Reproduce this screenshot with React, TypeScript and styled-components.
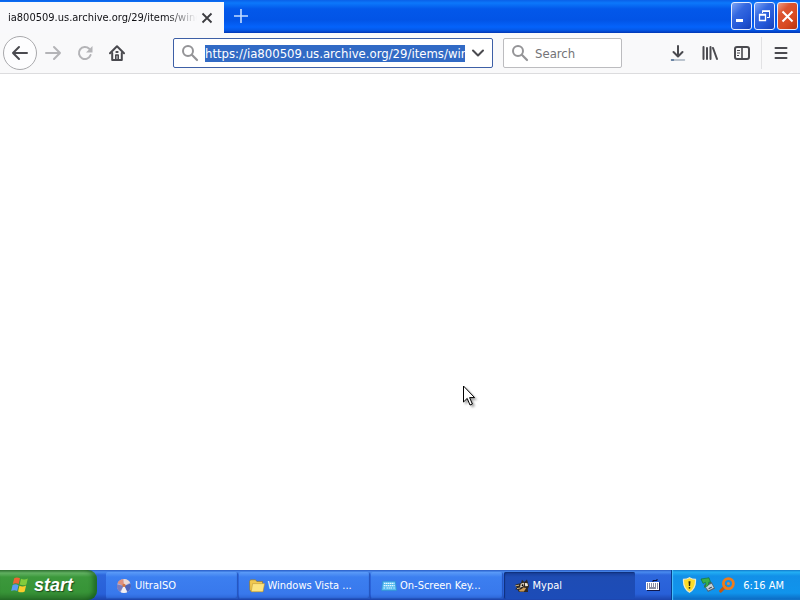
import React from "react";
import styled, { createGlobalStyle, css } from "styled-components";

const GlobalStyle = createGlobalStyle`
  *, *::before, *::after { box-sizing: border-box; }
  html, body { margin: 0; padding: 0; }
  body {
    font-family: "DejaVu Sans Condensed", "DejaVu Sans", sans-serif;
    font-size: 11px;
    overflow: hidden;
  }
  button, input { font: inherit; border: 0; padding: 0; margin: 0; background: none; }
  svg { display: block; flex: none; }
`;

const Desktop = styled.div`
  display: flex;
  flex-direction: column;
  height: 100vh;
  background: #fff;
`;

const TitleBar = styled.header`
  display: flex;
  align-items: stretch;
  height: 33px;
  padding-top: 2px;
  background: linear-gradient(#0a60e8 0, #0c78fb 3px, #0358ea 9px, #0254e6 20px, #0463fb 27px, #0458e8 30px, #0136b4 33px);
`;

const Tab = styled.div`
  display: flex;
  align-items: center;
  width: 224px;
  padding: 0 7px 0 8px;
  background: #f9f9fb;
`;

const TabTitle = styled.span`
  flex: 1;
  overflow: hidden;
  white-space: nowrap;
  color: #101014;
  line-height: 16px;
  mask-image: linear-gradient(to right, #000 84%, transparent);
`;

const TabClose = styled.button`
  display: grid;
  place-items: center;
  width: 20px;
  height: 20px;
  color: #3c3c40;
`;

const NewTab = styled.button`
  display: grid;
  place-items: center;
  width: 34px;
  height: 28px;
  color: #c4dcff;
`;

const WindowButtons = styled.div`
  display: flex;
  gap: 2px;
  margin-left: auto;
  padding-right: 2px;
`;

const WindowButton = styled.button<{ $close?: boolean }>`
  display: grid;
  place-items: center;
  width: 21px;
  height: 28px;
  border: 1px solid #e4ecff;
  border-radius: 3px;
  color: #fff;
  background: ${(p) =>
    p.$close
      ? "linear-gradient(135deg, #ee9a82 0, #dc5430 30%, #d94a22 65%, #b83410)"
      : "linear-gradient(135deg, #7ea4f4 0, #3468e0 35%, #2458d8 65%, #1640b8)"};
`;

const Toolbar = styled.nav`
  display: flex;
  align-items: center;
  height: 41px;
  padding: 0 3px;
  background: #f9f9fa;
  border-bottom: 1px solid #dcdcde;
  color: #4a4a4f;
`;

const ToolButton = styled.button<{ $dim?: boolean }>`
  display: grid;
  place-items: center;
  flex: none;
  width: 32px;
  height: 32px;
  color: ${(p) => (p.$dim ? "#b4b4b7" : "#4a4a4f")};
`;

const BackButton = styled(ToolButton)`
  width: 34px;
  height: 34px;
  border: 1px solid #a9a9ac;
  border-radius: 50%;
  background: #fdfdfe;
`;

const Field = styled.label<{ $active?: boolean }>`
  display: flex;
  align-items: center;
  height: 30px;
  background: #fff;
  border: 1px solid ${(p) => (p.$active ? "#3d5fa6" : "#bcbcbf")};
  border-radius: 2px;
  padding: 0 7px;
  gap: 6px;
  color: #949497;
  ${(p) =>
    p.$active
      ? css`
          flex: 1;
          margin-left: 40px;
        `
      : css`
          width: 119px;
          margin-left: 10px;
        `}
`;

const AddressInput = styled.input`
  flex: 1;
  min-width: 0;
  height: 17px;
  font-size: 13px;
  color: #fff;
  background: #316ac5;
  outline: none;
`;

const SearchInput = styled.input`
  flex: 1;
  min-width: 0;
  font-size: 13px;
  outline: none;
  &::placeholder { color: #737377; opacity: 1; }
`;

const DropButton = styled.button`
  display: grid;
  place-items: center;
  width: 14px;
  height: 20px;
  color: #4a4a4f;
`;

const ToolGroup = styled.div`
  display: flex;
  margin-left: 40px;
`;

const MenuGroup = styled.div`
  display: flex;
  margin-left: 3px;
  padding-left: 3px;
  border-left: 1px solid #e2e2e4;
`;

const Page = styled.main`
  flex: 1;
  background: #fff;
`;

const Pointer = styled.svg`
  position: absolute;
  left: 463px;
  top: 385px;
  filter: drop-shadow(2px 2px 1px rgba(0, 0, 0, 0.35));
`;

const Taskbar = styled.footer`
  display: flex;
  align-items: stretch;
  height: 30px;
  background: linear-gradient(#2a5cc4 0, #4a8cf0 2px, #2d66dc 5px, #2860d8 24px, #1c44ac 30px);
`;

const StartButton = styled.button`
  display: flex;
  align-items: center;
  gap: 4px;
  width: 97px;
  padding-left: 11px;
  border-radius: 0 9px 9px 0;
  color: #fff;
  font: italic bold 18px "Liberation Sans", sans-serif;
  text-shadow: 1px 1px 1px #1c4a1c;
  background: linear-gradient(#3a7e3a 0, #64b464 3px, #3c983c 7px, #379437 22px, #2a742a 30px);
  box-shadow: inset -4px 0 4px rgba(10, 70, 20, 0.5);
`;

const TaskList = styled.div`
  display: flex;
  flex: 1;
  gap: 1px;
  min-width: 0;
  margin-left: 9px;
  padding: 2px 0 1px;
`;

const Task = styled.button<{ $pressed?: boolean }>`
  display: flex;
  align-items: center;
  gap: 3px;
  flex: 1;
  min-width: 0;
  padding: 0 10px;
  border-radius: 2px;
  color: #fff;
  white-space: nowrap;
  background: ${(p) =>
    p.$pressed
      ? "linear-gradient(#163c94, #1e4cb4 5px, #1c4cb8)"
      : "linear-gradient(#5c9cf8, #3c7ff0 5px, #3878ec 22px, #2c64d4)"};
  box-shadow: ${(p) => (p.$pressed ? "inset 1px 1px 1px #10307c" : "inset -1px -1px 1px #2454bc")};
`;

const LanguageButton = styled.button`
  display: grid;
  place-items: center;
  width: 36px;
`;

const Tray = styled.div`
  display: flex;
  align-items: center;
  gap: 3px;
  width: 129px;
  padding: 0 10px;
  color: #fff;
  border-left: 1px solid #0a3c8c;
  box-shadow: inset 1px 0 1px #4cc4fc;
  background: linear-gradient(#0c70c4 0, #24b0f4 2px, #1290e8 6px, #1094ec 23px, #0c68c0 30px);
`;

const Clock = styled.time`
  margin-left: auto;
  margin-right: 6px;
  white-space: nowrap;
`;

const Magnifier = () => (
  <svg width="18" height="18" viewBox="0 0 18 18" fill="none" stroke="currentColor">
    <circle cx="7" cy="7" r="5" strokeWidth="2" />
    <path d="M10.8 10.8 16 16" strokeWidth="2.2" strokeLinecap="round" />
  </svg>
);

const FlagIcon = () => (
  <svg width="19" height="18" viewBox="0 0 19 18">
    <path d="M3.2 2.2C5 1 7 1.2 9 2.3L7.7 8C5.8 7 3.8 7 1.8 8Z" fill="#ee6434" />
    <path d="M10 2.8c2 1 4.4 1 6.8-.3l-1.4 5.9c-2.2 1.2-4.5 1.2-6.7.1Z" fill="#84cc3c" />
    <path d="M1.6 9c2-1 4-.9 5.9.2L6.2 15c-2-1.1-4-1.1-6 0Z" fill="#5c9cf4" />
    <path d="M8.4 9.7c2.2 1 4.4 1 6.7-.2l-1.4 5.9c-2.2 1.2-4.5 1.1-6.7 0Z" fill="#fccc2c" />
  </svg>
);

const DiscIcon = () => (
  <svg width="16" height="16" viewBox="0 0 15 16">
    <circle cx="7.5" cy="8" r="7" fill="#a9b4dc" />
    <path d="M7.5 8 1 5.3A7 7 0 0 1 7 1Z" fill="#e0907c" />
    <path d="M7.5 8 7 1a7 7 0 0 1 6.6 3.6Z" fill="#ecd8d4" />
    <path d="M7.5 8 3.4 13.7A7 7 0 0 1 .7 6.4Z" fill="#7c7cbc" />
    <path d="M7.5 8 14 5.5a7 7 0 0 1-3 8.6Z" fill="#4c64bc" />
    <path d="M7.5 6.8 10.6 14.3a7 7 0 0 1-6.3 0Z" fill="#f2f0f4" />
    <circle cx="7.5" cy="7.4" r="1.6" fill="#d07444" />
  </svg>
);

const FolderIcon = () => (
  <svg width="16" height="16" viewBox="0 0 16 16">
    <path d="M.5 3.2 1.5 1.8h5l1.3 1.6h5.7V6L14 13.5H2.2L.8 12Z" fill="#f0c850" stroke="#8c6c24" strokeWidth=".6" />
    <path d="M3.6 5.6h12L14 13.8H2.2Z" fill="#fce480" stroke="#b48c2c" strokeWidth=".5" />
  </svg>
);

const KeyboardIcon = () => (
  <svg width="16" height="16" viewBox="0 0 16 16">
    <path d="M1.6 3.2h12.8L15.6 12.6H.6Z" fill="#58bcf0" stroke="#3090d4" strokeWidth=".8" />
    <path d="M3 5.3h10.4M2.7 7.6h11M2.5 10h1.5M5.5 10h5.5M12.4 10h1.3" stroke="#e4f8ff" strokeWidth="1.2" strokeDasharray="1.5 .5" />
  </svg>
);

const RaccoonIcon = () => (
  <svg width="16" height="16" viewBox="0 0 16 16">
    <path d="M1 7C3 5.5 5.5 6 7 5L8 1.8 10.2 4 13 1.5 14.3 6c1 2 .8 3.2-.5 4.5L14 14H5L3.3 11.5 1 11.3 3 9.8Z" fill="#302820" />
    <path d="M6.8 5.8 10 4.8 9.7 8 6 9.8Z" fill="#ece0cc" />
    <path d="m10.8 5 2.6.3.6 2.6-2.8.3Z" fill="#f4ead8" />
    <path d="M5 11.8c2 .2 3-.8 4.2-2.2l3 .5-2.3 3.4H5.6Z" fill="#cc9c58" />
    <path d="M1.4 7.8 5 7.2M3 10.6 6 10" stroke="#c8b084" />
    <circle cx="8.5" cy="7.2" r=".9" fill="#000" />
  </svg>
);

const InputKeyboardIcon = () => (
  <svg width="14" height="14" viewBox="0 0 14 14">
    <path d="M7 4V2.5h4V1" fill="none" stroke="#080c30" />
    <rect x="1" y="4.5" width="13" height="8.5" fill="#10184c" />
    <rect x="0" y="4" width="13" height="8" fill="#fff" />
    <path d="M1 6h11M1 8h11" stroke="#101840" strokeDasharray="1 1" />
    <path d="M1 10h1M3 10h7M11 10h1" stroke="#101840" />
  </svg>
);

const ShieldIcon = () => (
  <svg width="15" height="16" viewBox="0 0 15 16">
    <path d="M7.5.7c2 1.3 4 1.7 6 1.7.4 6.1-1.3 10.1-6 12.9C2.8 12.5 1.1 8.5 1.5 2.4c2 0 4-.4 6-1.7Z" fill="#fcdc28" stroke="#ece8c8" strokeWidth="1.2" />
    <path d="M6.5 4.2h2L8.1 9H6.9Z" fill="#29260c" />
    <circle cx="7.5" cy="10.8" r=".9" fill="#29260c" />
  </svg>
);

const EjectIcon = () => (
  <svg width="16" height="16" viewBox="0 0 16 16">
    <path d="m3.6 8 8-3L15 11.4 8 15Z" fill="#586470" />
    <path d="m5.2 9.4 6.4-2.6 2.2 4L8.4 13.4Z" fill="#c4d4dc" />
    <path d="M1 2 9 .8 10.6 5.4 8.8 5C9 8.6 7.4 9.8 4.2 10.2 6 8.4 6.2 6.8 5.4 5.4L3 6.4Z" fill="#38b04c" stroke="#146c2c" strokeWidth=".6" />
    <path d="m8.6 11.6 3.2-1.4" stroke="#28303c" />
  </svg>
);

const SearchTrayIcon = () => (
  <svg width="16" height="16" viewBox="0 0 16 16" fill="none">
    <path d="M6 9.6 1.8 14" stroke="#c8580c" strokeWidth="3.2" strokeLinecap="round" />
    <circle cx="9.4" cy="6.6" r="5" stroke="#ec7c1c" strokeWidth="2.8" />
    <circle cx="9.4" cy="6.6" r="1.5" fill="#e88438" />
  </svg>
);

const tasks = [
  { label: "UltraISO", icon: <DiscIcon /> },
  { label: "Windows Vista ...", icon: <FolderIcon /> },
  { label: "On-Screen Key...", icon: <KeyboardIcon /> },
  { label: "Mypal", icon: <RaccoonIcon />, pressed: true },
];

export default function App() {
  return (
    <Desktop>
      <GlobalStyle />
      <TitleBar>
        <Tab>
          <TabTitle>ia800509.us.archive.org/29/items/windows</TabTitle>
          <TabClose aria-label="Close tab">
            <svg width="12" height="12" viewBox="0 0 12 12" fill="none" stroke="currentColor" strokeWidth="1.8">
              <path d="m1.5 1.5 9 9M10.5 1.5l-9 9" />
            </svg>
          </TabClose>
        </Tab>
        <NewTab aria-label="New tab">
          <svg width="14" height="14" viewBox="0 0 14 14" stroke="currentColor" strokeWidth="1.6">
            <path d="M7 0v14M0 7h14" />
          </svg>
        </NewTab>
        <WindowButtons>
          <WindowButton aria-label="Minimize">
            <svg width="15" height="18" viewBox="0 0 15 18">
              <path d="M2 12h7v3H2z" fill="#fff" />
            </svg>
          </WindowButton>
          <WindowButton aria-label="Restore">
            <svg width="13" height="14" viewBox="0 0 13 14" fill="none" stroke="currentColor">
              <path d="M4.5 4V2.5h7v6H9" />
              <path d="M4 2h8" strokeWidth="1.6" />
              <path d="M1.5 5.5h6v6h-6zM1 6h7" strokeWidth="1.3" />
            </svg>
          </WindowButton>
          <WindowButton $close aria-label="Close window">
            <svg width="13" height="13" viewBox="0 0 13 13" stroke="currentColor" strokeWidth="2">
              <path d="m1.5 1.5 10 10M11.5 1.5l-10 10" />
            </svg>
          </WindowButton>
        </WindowButtons>
      </TitleBar>
      <Toolbar>
        <BackButton aria-label="Back">
          <svg width="18" height="16" viewBox="0 0 18 16" fill="none" stroke="currentColor" strokeWidth="2" strokeLinecap="round" strokeLinejoin="round">
            <path d="M16 8H2m6-6L2 8l6 6" />
          </svg>
        </BackButton>
        <ToolButton $dim aria-label="Forward">
          <svg width="18" height="16" viewBox="0 0 18 16" fill="none" stroke="currentColor" strokeWidth="2" strokeLinecap="round" strokeLinejoin="round">
            <path d="M2 8h14m-6-6 6 6-6 6" />
          </svg>
        </ToolButton>
        <ToolButton $dim aria-label="Reload">
          <svg width="16" height="16" viewBox="0 0 16 16" fill="none" stroke="currentColor" strokeWidth="2">
            <path d="M13.6 10A6 6 0 1 1 12.2 3.8" strokeLinecap="round" />
            <path d="M15.5 1v6.5H9Z" fill="currentColor" stroke="none" />
          </svg>
        </ToolButton>
        <ToolButton aria-label="Home">
          <svg width="16" height="16" viewBox="0 0 16 16" fill="none" stroke="currentColor" strokeWidth="2" strokeLinejoin="round" strokeLinecap="round">
            <path d="m1 8.3 7-7 7 7" />
            <path d="M3.2 8v7h9.6V8" />
            <path d="M6.8 14.5V10h2.4v4.5" strokeWidth="1.6" />
            <path d="M7.4 7h1.2" />
          </svg>
        </ToolButton>
        <Field $active>
          <Magnifier />
          <AddressInput aria-label="Address" defaultValue="https://ia800509.us.archive.org/29/items/windows" />
          <DropButton aria-label="Show history">
            <svg width="14" height="9" viewBox="0 0 14 9" fill="none" stroke="currentColor" strokeWidth="2" strokeLinecap="round" strokeLinejoin="round">
              <path d="m2 1.5 5 5 5-5" />
            </svg>
          </DropButton>
        </Field>
        <Field>
          <Magnifier />
          <SearchInput aria-label="Search" placeholder="Search" />
        </Field>
        <ToolGroup>
          <ToolButton aria-label="Downloads">
            <svg width="16" height="16" viewBox="0 0 16 16" fill="none" stroke="currentColor" strokeWidth="2" strokeLinecap="round" strokeLinejoin="round">
              <path d="M8 1v10M3.5 7 8 11.5 12.5 7" />
              <path d="M1.5 15h13" strokeWidth="1.4" stroke="#a6b2c0" />
              <path d="M1.5 15h2" strokeWidth="1.4" stroke="#4c6c94" />
            </svg>
          </ToolButton>
          <ToolButton aria-label="Library">
            <svg width="16" height="16" viewBox="0 0 16 16" fill="none" stroke="currentColor" strokeWidth="2" strokeLinecap="round">
              <path d="M1.5 2v12M5 3v11M8.5 2v12M11 3l4 11" />
            </svg>
          </ToolButton>
          <ToolButton aria-label="Sidebars">
            <svg width="16" height="14" viewBox="0 0 16 14" fill="none" stroke="currentColor">
              <rect x="1" y="1" width="14" height="12" rx="2" strokeWidth="2" />
              <path d="M8 1v12" strokeWidth="1.6" />
              <path d="M3 4.5h3M3 7h3M3 9.5h2" strokeWidth="1" />
            </svg>
          </ToolButton>
        </ToolGroup>
        <MenuGroup>
          <ToolButton aria-label="Menu">
            <svg width="14" height="12" viewBox="0 0 14 12" stroke="currentColor" strokeWidth="2" strokeLinecap="round">
              <path d="M1.5 1h11M1.5 6h11M1.5 11h11" />
            </svg>
          </ToolButton>
        </MenuGroup>
      </Toolbar>
      <Page />
      <Taskbar>
        <StartButton>
          <FlagIcon />
          start
        </StartButton>
        <TaskList>
          {tasks.map((t) => (
            <Task key={t.label} $pressed={t.pressed}>
              {t.icon}
              {t.label}
            </Task>
          ))}
        </TaskList>
        <LanguageButton aria-label="Input language">
          <InputKeyboardIcon />
        </LanguageButton>
        <Tray>
          <ShieldIcon />
          <EjectIcon />
          <SearchTrayIcon />
          <Clock>6:16 AM</Clock>
        </Tray>
      </Taskbar>
      <Pointer width="12" height="21" viewBox="0 0 12 21" aria-hidden="true">
        <path d="M.5 1v16l3.7-3.6L7 20l2.4-1-2.8-6.4h5Z" fill="#fff" stroke="#000" />
      </Pointer>
    </Desktop>
  );
}
